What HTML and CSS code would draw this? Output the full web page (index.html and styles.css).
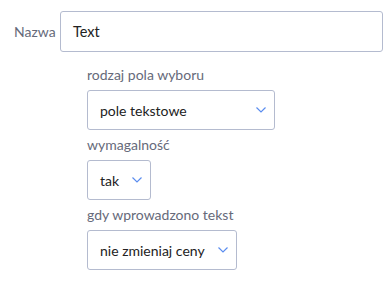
FILE: index.html
```html
<!DOCTYPE html>
<html lang="pl">
<head>
<meta charset="utf-8">
<link rel="stylesheet" href="styles.css">
</head>
<body>
<div class="form">
  <div class="name-row">
    <label class="name-label">Nazwa</label>
    <div class="text-input">Text</div>
  </div>
  <div class="sub">
    <div class="field">
      <div class="field-label">rodzaj pola wyboru</div>
      <div class="select select-wide"><span class="val">pole tekstowe</span><svg class="chev" width="10" height="6" viewBox="0 0 10 6"><path d="M0.5 0.5 L5 5 L9.5 0.5" fill="none" stroke="#5b8def" stroke-width="1.2"/></svg></div>
    </div>
    <div class="field">
      <div class="field-label">wymagalność</div>
      <div class="select"><span class="val">tak</span><svg class="chev" width="10" height="6" viewBox="0 0 10 6"><path d="M0.5 0.5 L5 5 L9.5 0.5" fill="none" stroke="#5b8def" stroke-width="1.2"/></svg></div>
    </div>
    <div class="field">
      <div class="field-label">gdy wprowadzono tekst</div>
      <div class="select"><span class="val">nie zmieniaj ceny</span><svg class="chev" width="10" height="6" viewBox="0 0 10 6"><path d="M0.5 0.5 L5 5 L9.5 0.5" fill="none" stroke="#5b8def" stroke-width="1.2"/></svg></div>
    </div>
  </div>
</div>
</body>
</html>
```

FILE: styles.css
```css
html, body {
  margin: 0;
  padding: 0;
  background: #ffffff;
}
body {
  font-family: Lato, "Noto Sans", sans-serif;
  color: #222;
}
.form {
  padding: 11px 6px 0 14px;
}
.name-row {
  display: flex;
  align-items: center;
  gap: 8px;
}
.name-label {
  font-size: 14px;
  color: #666a7a;
  width: 38px;
}
.text-input {
  flex: 1;
  height: 41px;
  box-sizing: border-box;
  border: 1px solid #b4bbcf;
  border-radius: 3px;
  display: flex;
  align-items: center;
  padding-left: 12px;
  font-size: 14.5px;
  color: #222;
}
.sub {
  margin-left: 73px;
  margin-top: 14px;
  display: flex;
  flex-direction: column;
  gap: 6px;
}
.field {
  display: flex;
  flex-direction: column;
  align-items: flex-start;
  gap: 6px;
}
.field-label {
  font-size: 14px;
  line-height: 18px;
  color: #666a7a;
}
.select {
  height: 40px;
  box-sizing: border-box;
  border: 1px solid #b4bbcf;
  border-radius: 3px;
  display: flex;
  align-items: center;
  justify-content: space-between;
  gap: 13px;
  padding: 0 8px 0 12px;
  font-size: 14px;
  color: #222;
}
.select-wide {
  width: 188px;
}
.chev {
  display: block;
  flex: none;
}
```
